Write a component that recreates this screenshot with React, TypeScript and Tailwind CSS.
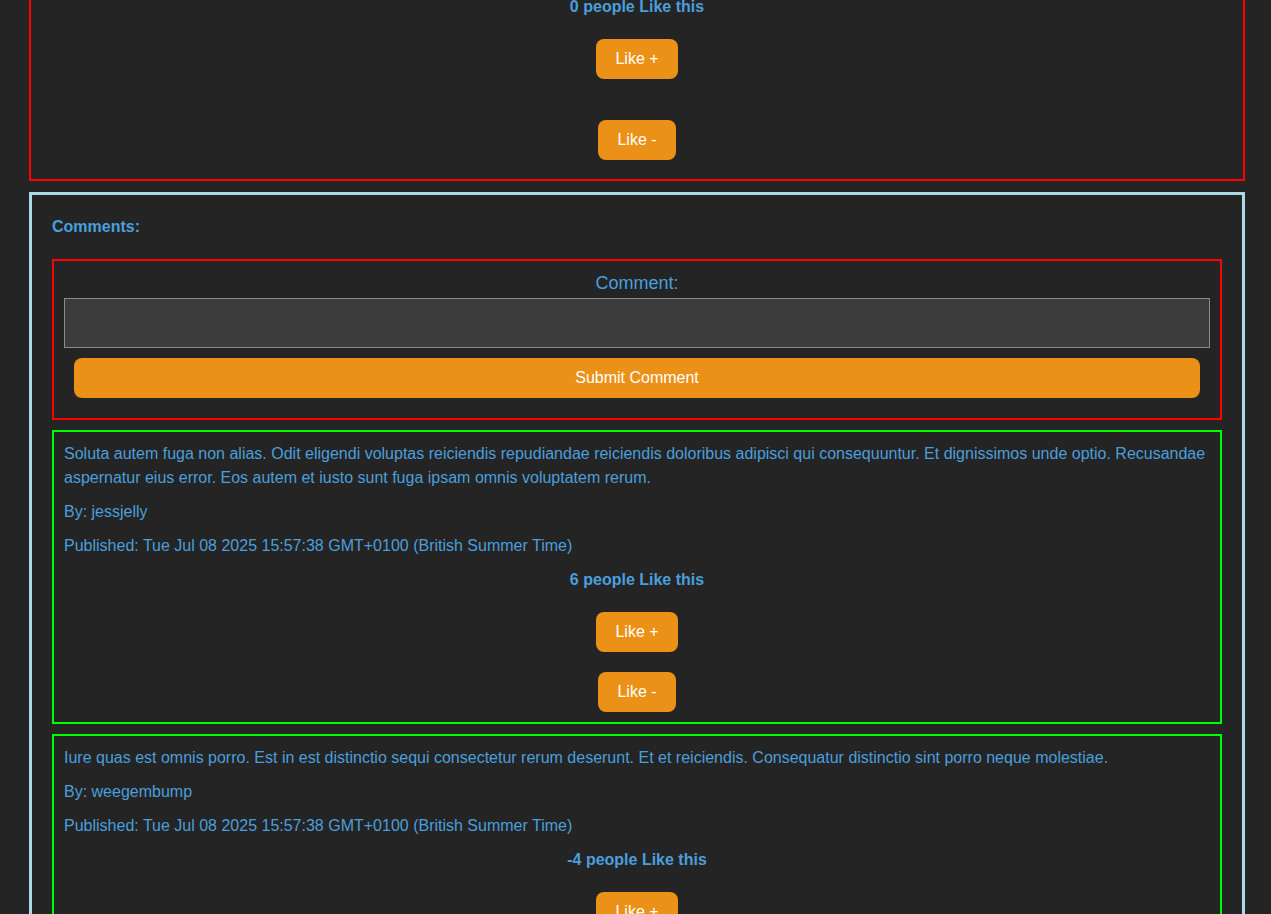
import React from "react";

type Comment = {
  id: number;
  body: string;
  author: string;
  published: string;
  votes: number;
};

const comments: Comment[] = [
  {
    id: 1,
    body: "Soluta autem fuga non alias. Odit eligendi voluptas reiciendis repudiandae reiciendis doloribus adipisci qui consequuntur. Et dignissimos unde optio. Recusandae aspernatur eius error. Eos autem et iusto sunt fuga ipsam omnis voluptatem rerum.",
    author: "jessjelly",
    published: "Tue Jul 08 2025 15:57:38 GMT+0100 (British Summer Time)",
    votes: 6,
  },
  {
    id: 2,
    body: "Iure quas est omnis porro. Est in est distinctio sequi consectetur rerum deserunt. Et et reiciendis. Consequatur distinctio sint porro neque molestiae.",
    author: "weegembump",
    published: "Tue Jul 08 2025 15:57:38 GMT+0100 (British Summer Time)",
    votes: -4,
  },
];

function LikeButton({ label }: { label: string }) {
  return (
    <button className="h-10 px-[19px] rounded-lg bg-[#ec9118] text-white text-base font-medium leading-none">
      {label}
    </button>
  );
}

function CommentCard({ comment }: { comment: Comment }) {
  return (
    <div className="mt-[10px] border-2 border-[#00ff00] p-[10px] flex flex-col gap-[10px] leading-6">
      <p>{comment.body}</p>
      <p>By: {comment.author}</p>
      <p>Published: {comment.published}</p>
      <p className="text-center font-bold">{comment.votes} people Like this</p>
      <div className="flex flex-col items-center gap-5 mt-[10px]">
        <LikeButton label="Like +" />
        <LikeButton label="Like -" />
      </div>
    </div>
  );
}

export default function App() {
  return (
    <div className="min-h-screen bg-[#242424] pl-[29px] pr-[26px] pb-10 text-[#4a9fdc] font-['Liberation_Sans',sans-serif] text-base overflow-hidden">
      {/* article votes, scrolled partly out of view */}
      <section className="border-2 border-t-0 border-[#ff0000] flex flex-col items-center pb-[19px]">
        <p className="-mt-[5px] leading-6 font-bold">0 people Like this</p>
        <div className="mt-[20px]">
          <LikeButton label="Like +" />
        </div>
        <div className="mt-[41px]">
          <LikeButton label="Like -" />
        </div>
      </section>

      <section className="mt-[11px] border-[3px] border-[#add8e6] px-5 pt-[20px]">
        <h2 className="font-bold leading-6">Comments:</h2>

        <form
          className="mt-[20px] border-2 border-[#ff0000] px-[10px] pb-5 pt-2 flex flex-col"
          onSubmit={(e) => e.preventDefault()}
        >
          <label htmlFor="comment" className="text-center text-lg leading-[29px]">
            Comment:
          </label>
          <input
            id="comment"
            className="h-[50px] bg-[#3b3b3b] border border-[#8a8a8a] text-white px-2 outline-none"
          />
          <button
            type="submit"
            className="mt-[10px] mx-[10px] h-10 rounded-lg bg-[#ec9118] text-white font-medium"
          >
            Submit Comment
          </button>
        </form>

        {comments.map((c) => (
          <CommentCard key={c.id} comment={c} />
        ))}
      </section>
    </div>
  );
}
